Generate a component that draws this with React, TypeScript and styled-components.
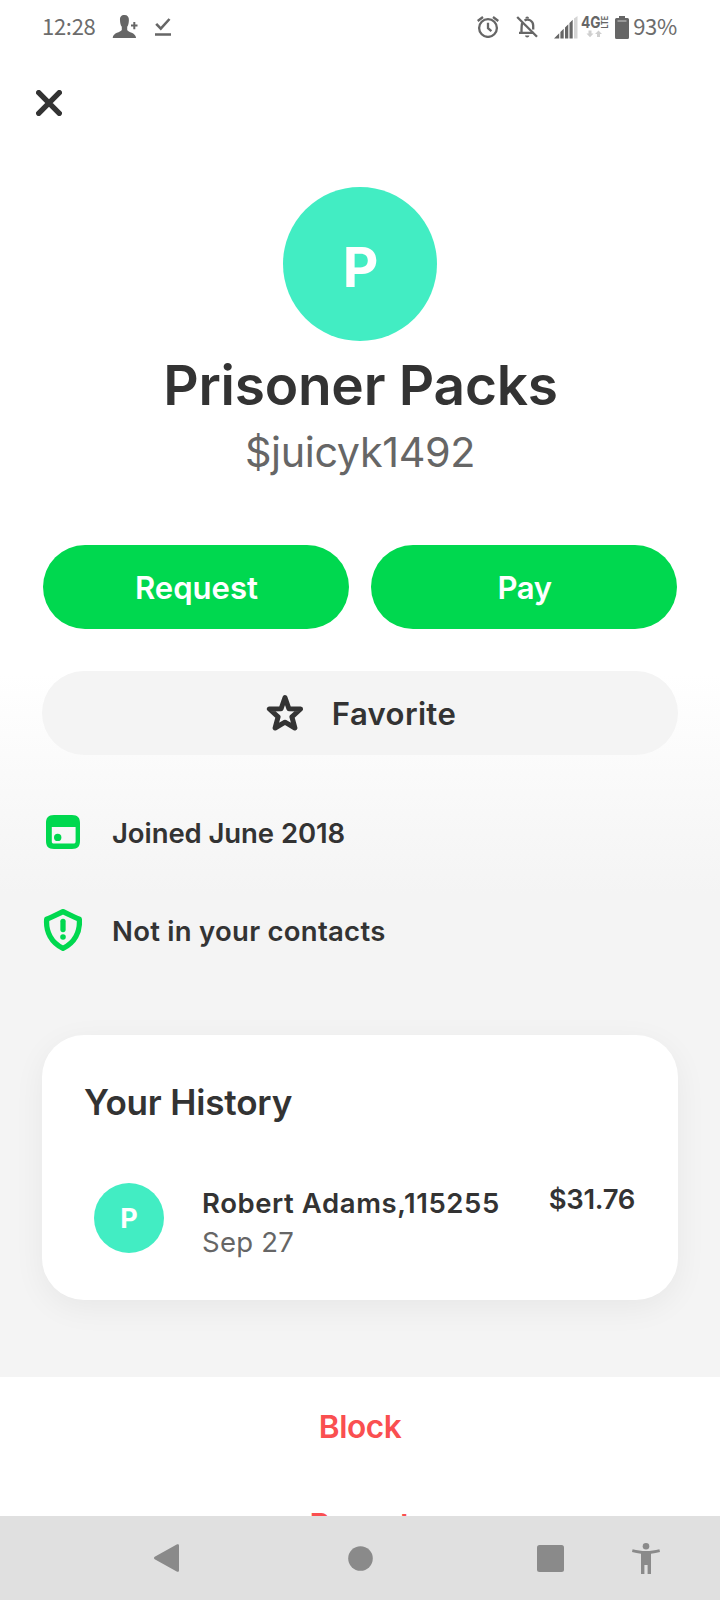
import React from 'react';
import styled, { createGlobalStyle } from 'styled-components';

const GlobalStyle = createGlobalStyle`
  * { box-sizing: border-box; }
  body { margin: 0; background: #fff; font-family: Inter, "Liberation Sans", sans-serif; color: #333; }
  svg { display: block; flex: none; }
  button { font: inherit; color: inherit; border: 0; background: none; padding: 0; }
`;

const Screen = styled.div`
  width: 720px;
  height: 1600px;
  overflow: hidden;
  display: flex;
  flex-direction: column;
`;

const StatusBar = styled.header`
  height: 54px;
  padding: 0 43px 0 42px;
  display: flex;
  align-items: center;
  justify-content: space-between;
  color: #666;
`;

const StatusGroup = styled.div`
  height: 54px;
  display: flex;
  align-items: center;
`;

const StatusText = styled.span<{ $tracking: number }>`
  height: 54px;
  font: 400 22px/51px "Noto Sans CJK SC", "Noto Sans", sans-serif;
  letter-spacing: ${(p) => p.$tracking}px;
  color: #6c6c6c;
`;

const Content = styled.main`
  height: 1323px;
  flex: none;
  padding: 0 42px;
  display: flex;
  flex-direction: column;
  background: linear-gradient(#fff 620px, #f4f4f4 840px);
`;

const CloseButton = styled.button`
  width: 26px;
  height: 26px;
  margin: 36px 0 0 -6px;
`;

const Avatar = styled.div<{ $size: number }>`
  width: ${(p) => p.$size}px;
  height: ${(p) => p.$size}px;
  flex: none;
  border-radius: 50%;
  background: #42edc3;
  color: #fff;
  display: flex;
  align-items: center;
  justify-content: center;
`;

const ProfileHeader = styled.section`
  margin-top: 71px;
  display: flex;
  flex-direction: column;
  align-items: center;
`;

const Initial = styled.span<{ $size: number }>`
  font-size: ${(p) => p.$size}px;
  font-weight: 700;
  line-height: 1;
  padding: ${(p) => (p.$size > 40 ? '6px 0 0 1px' : '1px 0 0 0')};
`;

const Name = styled.h1`
  margin: 14px 0 0 1px;
  font-size: 55px;
  font-weight: 600;
  line-height: 60px;
  letter-spacing: -0.25px;
`;

const Cashtag = styled.div`
  margin-top: 12px;
  font-size: 41.3px;
  line-height: 50px;
  letter-spacing: -0.36px;
  color: #666;
`;

const ActionRow = styled.div`
  margin: 68px 1px 0;
  display: grid;
  grid-template-columns: 1fr 1fr;
  gap: 22px;
`;

const PillButton = styled.button<{ $soft?: boolean; $tracking?: number }>`
  height: 84px;
  padding: 2px 0 0 1px;
  border-radius: 42px;
  display: flex;
  align-items: center;
  justify-content: center;
  gap: 28px;
  background: ${(p) => (p.$soft ? '#f4f4f4' : '#00d84f')};
  color: ${(p) => (p.$soft ? '#333' : '#fff')};
  font-size: 31.1px;
  font-weight: 600;
  letter-spacing: ${(p) => p.$tracking ?? 0}px;
`;

const FavoriteButton = styled(PillButton)`
  margin-top: 42px;
  padding-left: 2px;
  flex: none;
`;

const Facts = styled.ul`
  list-style: none;
  margin: 28px 0 0;
  padding: 0;
`;

const Fact = styled.li<{ $tracking: number }>`
  height: 98px;
  display: grid;
  grid-template-columns: 40px 1fr;
  column-gap: 30px;
  align-items: center;
  font-size: 27.5px;
  font-weight: 600;
  letter-spacing: ${(p) => p.$tracking}px;
`;

const FactLabel = styled.span`
  padding-top: 2px;
`;

const HistoryCard = styled.section`
  margin-top: 56px;
  height: 265px;
  padding: 41px 43px 0 42px;
  border-radius: 42px;
  background: #fff;
  box-shadow: 0 8px 32px rgba(0, 0, 0, 0.055);
`;

const CardTitle = styled.h2`
  margin: 0;
  font-size: 35.1px;
  font-weight: 600;
  line-height: 53px;
  letter-spacing: -0.18px;
`;

const Payment = styled.div`
  margin-top: 54px;
  padding-left: 10px;
  display: flex;
  align-items: flex-start;
`;

const PaymentInfo = styled.div`
  margin: 1px 0 0 38px;
  flex: 1;
`;

const Payee = styled.div`
  font-size: 27.5px;
  font-weight: 600;
  line-height: 38px;
  letter-spacing: 0.58px;
`;

const PaymentDate = styled.div`
  font-size: 27.5px;
  line-height: 40px;
  letter-spacing: 0.25px;
  color: #666;
`;

const Amount = styled.div`
  font-size: 27.5px;
  font-weight: 600;
  line-height: 32px;
  letter-spacing: -0.32px;
`;

const DangerList = styled.section`
  height: 139px;
  flex: none;
  overflow: hidden;
  display: flex;
  flex-direction: column;
  align-items: center;
`;

const DangerButton = styled.button<{ $tracking: number }>`
  height: 98px;
  flex: none;
  color: #fa4f50;
  font-size: 31.6px;
  font-weight: 600;
  letter-spacing: ${(p) => p.$tracking}px;
`;

const NavBar = styled.nav`
  height: 84px;
  flex: none;
  padding: 0 59px 0 154px;
  display: flex;
  align-items: center;
  background: #e0e0e0;
  color: #8a8a8a;
`;

const NavSlot = styled.span<{ $before: number }>`
  margin-left: ${(p) => p.$before}px;
`;

const Gap = styled.span<{ $w: number }>`
  width: ${(p) => p.$w}px;
  flex: none;
`;

const PersonAddIcon = () => (
  <svg width="26" height="24" viewBox="0 0 26 24" fill="currentColor">
    <path d="M12.500 0c-3.300 0-4.700 2-4.500 5 .1 3 .5 5 1.800 6.800v3.200C8.600 17.600 1.200 17.200.7 23h23.400c-.6-5.800-8-5.400-8.900-8v-3.200c1.300-1.800 1.600-3.800 1.700-6.800C17.100 2 15.500 0 12.500 0Z" />
    <path d="M21.300 7h2v2.400h2.200v2h-2.200v2.800h-2v-2.800h-2.300v-2h2.300z" />
  </svg>
);

const CheckIcon = () => (
  <svg width="16" height="18" viewBox="0 0 16 18" fill="none" stroke="currentColor" strokeWidth="2.600">
    <path d="M1.200 5.800 5.800 10.600 14.500 1M0 16.500h16" />
  </svg>
);

const AlarmIcon = () => (
  <svg width="22" height="22" viewBox="0 0 22 22" fill="none" stroke="currentColor" strokeWidth="2.300">
    <circle cx="11" cy="12" r="8.900" />
    <path d="M11 6.800v5.400l3.400 3M.7 5 6 1M21.300 5 16 1" />
  </svg>
);

const BellOffIcon = () => (
  <svg width="22" height="22" viewBox="0 0 22 22" fill="none" stroke="currentColor" strokeWidth="2.300">
    <path d="M6.200 7C5.500 9 5.500 11 5.500 16M3 16.800h14.500M8.500 4.500c4-2.500 8.700.5 8.700 5v4" />
    <path d="M1.200 1 21 20.800" />
    <path d="M9.300 2.500a1.900 1.900 0 0 1 3.800 0M9 19.500h4.400c-.3 2.600-4.100 2.600-4.400 0Z" fill="currentColor" stroke="none" />
  </svg>
);

const SignalIcon = () => (
  <svg width="24" height="23" viewBox="0 0 24 23" fill="currentColor">
    <path d="M0 22.500 5.200 17.300v5.200zM6.400 16 9.700 12.800v9.700h-3.300zM11 11.500l3.300-3.200v14.200h-3.300zM15.500 7l3.200-3.200v18.700h-3.200z" />
    <path d="M20 2.500 23.500 0v22.500H20z" fill="#d4d4d4" />
  </svg>
);

const NetworkBadge = () => (
  <svg width="28" height="24" viewBox="0 0 28 24" fill="currentColor">
    <text x="0" y="12.500" fontFamily="Inter, sans-serif" fontSize="16" fontWeight="700" textLength="19.500" lengthAdjust="spacingAndGlyphs">4G</text>
    <text transform="translate(26.500 13.500) rotate(-90)" fontFamily="Inter, sans-serif" fontSize="8.500" fontWeight="700" textLength="12.500" lengthAdjust="spacingAndGlyphs">LTE</text>
    <path d="M7.500 15.500h3v3h2L9 22.200 5.500 18.500h2zM16 22v-3h-2l3.500-3.600L21 19h-2v3z" fill="#cfcfcf" />
  </svg>
);

const BatteryIcon = () => (
  <svg width="14" height="23" viewBox="0 0 14 23" fill="currentColor">
    <path d="M4 0h6v2h2.500A1.500 1.500 0 0 1 14 3.500v18a1.500 1.500 0 0 1-1.500 1.500h-11A1.500 1.500 0 0 1 0 21.500v-18A1.500 1.500 0 0 1 1.500 2H4z" />
    <path d="M2.500 5h9" stroke="#b5b5b5" strokeWidth="1.300" />
  </svg>
);

const CloseIcon = () => (
  <svg width="26" height="26" viewBox="0 0 26 26" stroke="#333" strokeWidth="5.400" strokeLinecap="round">
    <path d="m2.700 2.700 20.600 20.600M23.300 2.700 2.700 23.300" />
  </svg>
);

const StarIcon = () => (
  <svg width="38" height="40" viewBox="0 0 38 40" fill="none" stroke="#333" strokeWidth="5" strokeLinejoin="round">
    <path d="m19 3.500 3.900 11.200 11.700.3-8.700 7.800 3 11.200L19 28.200 9.100 34l3-11.200L3.400 15l11.700-.3Z" />
  </svg>
);

const CalendarIcon = () => (
  <svg width="40" height="34" viewBox="0 0 40 34" fill="#00d84f">
    <path fillRule="evenodd" d="M12 0h18c6 0 8 3 8 8v18c0 5-2 8-8 8H12c-6 0-8-3-8-8V8c0-5 2-8 8-8ZM9.800 12v14.500c0 1.400.7 2.100 2.100 2.100h19.600c1.400 0 2.100-.7 2.100-2.100V12Z" />
    <circle cx="15.700" cy="22.400" r="3.700" />
  </svg>
);

const ShieldIcon = () => (
  <svg width="40" height="42" viewBox="0 0 40 42" fill="none" stroke="#00d84f" strokeWidth="5.300">
    <path strokeLinejoin="round" d="M21 2.600c-5 3-10.500 5-16.300 7.600C3.600 23 9.500 34 21 39.400 32.500 34 38.400 23 37.300 10.200 31.500 7.600 26 5.600 21 2.600Z" />
    <path strokeLinecap="round" d="M21 12.300v8.200" />
    <circle cx="21" cy="28" r="2.800" fill="#00d84f" stroke="none" />
  </svg>
);

const BackIcon = () => (
  <svg width="25" height="28" viewBox="0 0 25 28" fill="currentColor">
    <path d="M.7 12.700 22.700.4c1.300-.6 2.300-.1 2.300 1.100v25c0 1.200-1 1.700-2.300 1.100L.7 15.300c-1-.8-1-1.800 0-2.600Z" />
  </svg>
);

const HomeIcon = () => (
  <svg width="25" height="25" viewBox="0 0 25 25" fill="currentColor">
    <circle cx="12.500" cy="12.500" r="12.300" />
  </svg>
);

const RecentsIcon = () => (
  <svg width="27" height="27" viewBox="0 0 27 27" fill="currentColor">
    <rect width="27" height="27" rx="2.500" />
  </svg>
);

const AccessibilityIcon = () => (
  <svg width="28" height="31" viewBox="0 0 28 31" fill="currentColor">
    <circle cx="14" cy="3.300" r="3.300" />
    <path d="M.6 6.200c9 2.400 17.800 2.400 26.800 0l.6 2.900c-3 .9-6 1.400-9 1.600V31h-3.400v-9h-3.200v9H9V10.700c-3-.2-6-.7-9-1.600Z" />
  </svg>
);

export default function App() {
  return (
    <Screen>
      <GlobalStyle />
      <StatusBar>
        <StatusGroup>
          <StatusText $tracking={-0.3}>12:28</StatusText>
          <Gap $w={17} />
          <PersonAddIcon />
          <Gap $w={17} />
          <CheckIcon />
        </StatusGroup>
        <StatusGroup>
          <AlarmIcon />
          <Gap $w={17} />
          <BellOffIcon />
          <Gap $w={16} />
          <SignalIcon />
          <Gap $w={3} />
          <NetworkBadge />
          <Gap $w={6} />
          <BatteryIcon />
          <Gap $w={4} />
          <StatusText $tracking={-0.3}>93%</StatusText>
        </StatusGroup>
      </StatusBar>
      <Content>
        <CloseButton aria-label="Close">
          <CloseIcon />
        </CloseButton>
        <ProfileHeader>
          <Avatar $size={154}>
            <Initial $size={55}>P</Initial>
          </Avatar>
          <Name>Prisoner Packs</Name>
          <Cashtag>$juicyk1492</Cashtag>
        </ProfileHeader>
        <ActionRow>
          <PillButton>Request</PillButton>
          <PillButton $tracking={-0.5}>Pay</PillButton>
        </ActionRow>
        <FavoriteButton $soft $tracking={0.35}>
          <StarIcon />
          Favorite
        </FavoriteButton>
        <Facts>
          <Fact $tracking={-0.08}>
            <CalendarIcon />
            <FactLabel>Joined June 2018</FactLabel>
          </Fact>
          <Fact $tracking={0.27}>
            <ShieldIcon />
            <FactLabel>Not in your contacts</FactLabel>
          </Fact>
        </Facts>
        <HistoryCard>
          <CardTitle>Your History</CardTitle>
          <Payment>
            <Avatar $size={70}>
              <Initial $size={27}>P</Initial>
            </Avatar>
            <PaymentInfo>
              <Payee>Robert Adams,115255</Payee>
              <PaymentDate>Sep 27</PaymentDate>
            </PaymentInfo>
            <Amount>$31.76</Amount>
          </Payment>
        </HistoryCard>
      </Content>
      <DangerList>
        <DangerButton $tracking={-0.45}>Block</DangerButton>
        <DangerButton $tracking={-0.2}>Report</DangerButton>
      </DangerList>
      <NavBar>
        <NavSlot $before={0}><BackIcon /></NavSlot>
        <NavSlot $before={169}><HomeIcon /></NavSlot>
        <NavSlot $before={164}><RecentsIcon /></NavSlot>
        <NavSlot $before={68}><AccessibilityIcon /></NavSlot>
      </NavBar>
    </Screen>
  );
}
